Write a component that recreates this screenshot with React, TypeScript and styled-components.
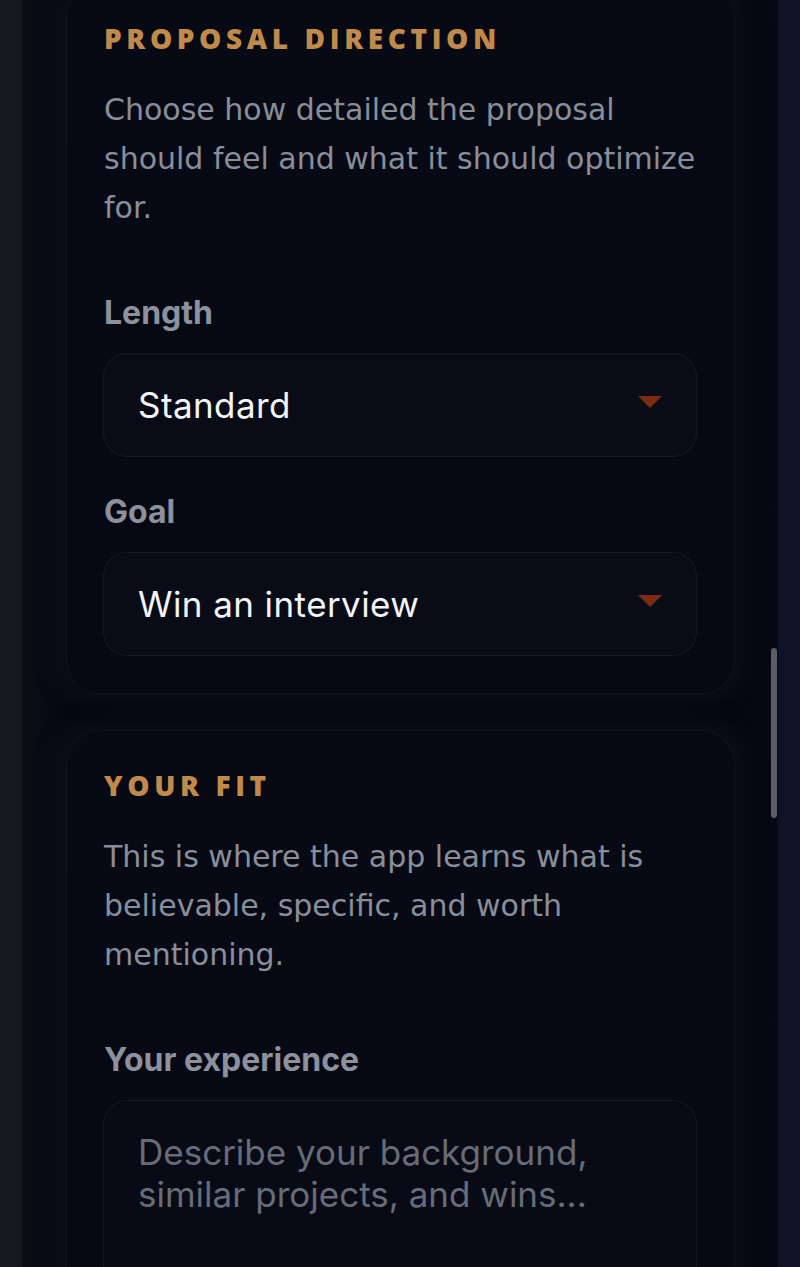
import React, { FC } from "react";
import styled, { createGlobalStyle } from "styled-components";

const GlobalStyle = createGlobalStyle`
  html, body {
    margin: 0;
    padding: 0;
    height: 100%;
    overflow: hidden;
  }
  body {
    background: linear-gradient(90deg, #16181d 0, #15171c 22px, #0f1326 778px, #10142a 800px);
    -webkit-font-smoothing: antialiased;
  }
`;

type SelectProps = { value: string };

const SelectField: FC<SelectProps> = ({ value }) => (
  <Select>
    <SelectValue>{value}</SelectValue>
    <Caret />
  </Select>
);

const App: FC = () => {
  return (
    <>
      <GlobalStyle />
      <Screen>
        <Stack>
          <Card>
            <Eyebrow>Proposal direction</Eyebrow>
            <Lead>
              Choose how detailed the proposal should feel and what it should
              optimize for.
            </Lead>
            <Field>
              <Label>Length</Label>
              <SelectField value="Standard" />
            </Field>
            <Field $tight>
              <Label>Goal</Label>
              <SelectField value="Win an interview" />
            </Field>
          </Card>

          <Card>
            <Eyebrow>Your fit</Eyebrow>
            <Lead>
              This is where the app learns what is believable, specific, and
              worth mentioning.
            </Lead>
            <Field>
              <Label>Your experience</Label>
              <TextArea placeholder="Describe your background, similar projects, and wins..." />
            </Field>
          </Card>
        </Stack>
        <ScrollThumb />
      </Screen>
    </>
  );
};

const Screen = styled.div`
  position: relative;
  margin: 0 22px;
  height: 1267px;
  overflow: hidden;
  background: linear-gradient(
    90deg,
    #0b0e16 0,
    #070a12 30px,
    #04070e 60px,
    #04070e 700px,
    #060912 756px
  );
`;

const Stack = styled.div`
  display: flex;
  flex-direction: column;
  gap: 36px;
  margin-top: -17px;
  padding: 0 43px 0 44px;
`;

const Card = styled.section`
  border-radius: 34px;
  border: 1px solid rgba(255, 255, 255, 0.045);
  background: linear-gradient(180deg, #070a14 0%, #060913 100%);
  box-shadow: 0 0 22px 10px rgba(24, 29, 44, 0.35);
  padding: 37px 35px 37px 37px;
`;

const Eyebrow = styled.h2`
  margin: 0;
  font-family: "Open Sans", "DejaVu Sans", sans-serif;
  font-weight: 800;
  font-size: 28px;
  line-height: 34px;
  letter-spacing: 0.165em;
  text-transform: uppercase;
  color: #c18a4b;
`;

const Lead = styled.p`
  margin: 30px 0 0;
  font-family: "DejaVu Sans", sans-serif;
  font-size: 30px;
  line-height: 49px;
  color: #898e9b;
`;

const Field = styled.div<{ $tight?: boolean }>`
  display: flex;
  flex-direction: column;
  gap: 20px;
  margin-top: ${(p) => (p.$tight ? "35px" : "61px")};
  margin-right: 2px;
`;

const Label = styled.label`
  font-family: Inter, "Liberation Sans", sans-serif;
  font-weight: 700;
  font-size: 32px;
  line-height: 40px;
  color: #8c919d;
`;

const Select = styled.div`
  display: flex;
  align-items: center;
  justify-content: space-between;
  height: 104px;
  box-sizing: border-box;
  padding: 0 34px 0 34px;
  margin-left: -1px;
  border-radius: 24px;
  border: 1px solid rgba(255, 255, 255, 0.055);
  background: #090c16;
`;

const SelectValue = styled.span`
  font-family: Inter, "Liberation Sans", sans-serif;
  font-size: 35px;
  letter-spacing: 0.012em;
  color: #f3f4f6;
`;

const Caret = styled.span`
  width: 0;
  height: 0;
  border-left: 12.5px solid transparent;
  border-right: 12.5px solid transparent;
  border-top: 12px solid #7d2c12;
  margin-top: -6px;
`;

const TextArea = styled.textarea`
  display: block;
  height: 220px;
  box-sizing: border-box;
  margin-left: -1px;
  padding: 30px 34px;
  resize: none;
  border-radius: 24px;
  border: 1px solid rgba(255, 255, 255, 0.055);
  background: #080b15;
  font-family: Inter, "Liberation Sans", sans-serif;
  font-size: 35px;
  line-height: 42px;
  color: #f3f4f6;
  outline: none;

  &::placeholder {
    color: #676c78;
  }
`;

const ScrollThumb = styled.div`
  position: absolute;
  top: 648px;
  right: 1px;
  width: 6px;
  height: 170px;
  border-radius: 4px;
  background: #5c5d62;
`;

export default App;
